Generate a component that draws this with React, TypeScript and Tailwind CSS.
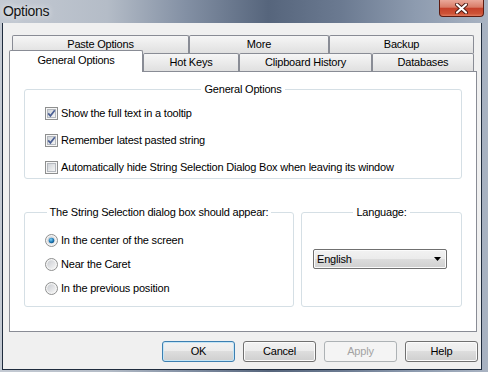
import React from "react";

const Check = ({ checked }: { checked: boolean }) => (
  <svg width="13" height="13" viewBox="0 0 13 13" className="shrink-0">
    <defs>
      <linearGradient id="cbFill" x1="0" y1="0" x2="1" y2="1">
        <stop offset="0" stopColor="#cdd1d6" />
        <stop offset="1" stopColor="#f7f7f7" />
      </linearGradient>
    </defs>
    <rect x="0.5" y="0.5" width="12" height="12" fill="#f6f6f6" stroke="#8e8f8f" />
    <rect x="2.5" y="2.5" width="8" height="8" fill="url(#cbFill)" stroke="#b4b8be" />
    {checked && (
      <path d="M3.2 6.4 L5.4 8.9 L9.8 3.3" fill="none" stroke="#4b5f94" strokeWidth="1.7" />
    )}
  </svg>
);

const Radio = ({ checked }: { checked: boolean }) => (
  <svg width="13" height="13" viewBox="0 0 13 13" className="shrink-0">
    <defs>
      <linearGradient id="rbFill" x1="0" y1="0" x2="1" y2="1">
        <stop offset="0" stopColor="#c9ccd1" />
        <stop offset="1" stopColor="#f6f6f6" />
      </linearGradient>
      <radialGradient id="rbDot" cx="0.4" cy="0.35" r="0.7">
        <stop offset="0" stopColor="#7fd0f6" />
        <stop offset="0.6" stopColor="#1f7bb8" />
        <stop offset="1" stopColor="#0c4c7c" />
      </radialGradient>
    </defs>
    <circle cx="6.5" cy="6.5" r="6" fill="#f4f4f4" stroke="#8e8f8f" />
    <circle cx="6.5" cy="6.5" r="4.3" fill="url(#rbFill)" />
    {checked && <circle cx="6.5" cy="6.5" r="2.8" fill="url(#rbDot)" />}
  </svg>
);

const tabBase =
  "h-full flex items-center justify-center border border-b-0 border-[#898c95] rounded-t-[2px] bg-linear-to-b from-[#f6f6f6] to-[#e0e0e0] text-[11px] tracking-[-0.2px] text-black";

const btnBase =
  "w-[73px] h-[21px] rounded-[3px] border text-[11px] tracking-[-0.2px] flex items-center justify-center";

export default function App() {
  const checks = [
    { label: "Show the full text in a tooltip", checked: true },
    { label: "Remember latest pasted string", checked: true },
    { label: "Automatically hide String Selection Dialog Box when leaving its window", checked: false },
  ];
  const radios = [
    { label: "In the center of the screen", checked: true },
    { label: "Near the Caret", checked: false },
    { label: "In the previous position", checked: false },
  ];

  return (
    <div className="w-[488px] h-[372px] flex flex-col overflow-hidden font-['Liberation_Sans',Arial,sans-serif] bg-[linear-gradient(90deg,#c4cad3_0%,#b4bcc7_22%,#8390a4_38%,#56657c_55%,#6b7a91_70%,#8d9baf_85%,#a9b3c2_100%)]">
      {/* Title bar */}
      <div className="h-[23px] flex items-start justify-between">
        <span className="pl-[3px] pt-[3px] text-[14px] tracking-[-0.3px] text-[#141414] leading-[17px] [text-shadow:0_0_6px_#ffffff]">
          Options
        </span>
        <div className="mr-[4px] w-[45px] h-[17px] rounded-b-[4px] border border-t-0 border-[#5e1b10] bg-[linear-gradient(#eaa899,#d97c67_45%,#c5412a_52%,#cd5236_85%,#e07a5e)] flex items-center justify-center">
          <svg width="13" height="11" viewBox="0 0 13 11">
            <path d="M2 1.5 L11 9.5 M11 1.5 L2 9.5" stroke="#4a1a12" strokeWidth="4" strokeLinecap="round" />
            <path d="M2 1.5 L11 9.5 M11 1.5 L2 9.5" stroke="#ffffff" strokeWidth="2.2" strokeLinecap="round" />
          </svg>
        </div>
      </div>

      <div className="flex">
        <div className="w-[2px]" />
        {/* Client area */}
        <div className="w-[480px] h-[347px] border border-t-0 border-[#1f2c3e] bg-[#f0f0f0] pl-[6px] pr-[4px] pt-[12px]">
          {/* Back tab row */}
          <div className="flex h-[18px] ml-[3px]">
            <div className={`${tabBase} w-[177px]`}>Paste Options</div>
            <div className={`${tabBase} w-[140px]`}>More</div>
            <div className={`${tabBase} w-[145px]`}>Backup</div>
          </div>
          {/* Front tab row */}
          <div className="flex h-[18px] items-end">
            <div className="relative z-10 w-[134px] h-[22px] -mb-px border border-b-0 border-[#898c95] rounded-t-[2px] bg-white flex items-center justify-center pb-[3px] text-[11px] tracking-[-0.2px] text-black">
              General Options
            </div>
            <div className={`${tabBase} w-[96px]`}>Hot Keys</div>
            <div className={`${tabBase} w-[133px]`}>Clipboard History</div>
            <div className={`${tabBase} w-[102px]`}>Databases</div>
          </div>

          {/* Tab panel */}
          <div className="h-[261px] border border-[#898c95] bg-white px-[14px] pt-[10px] text-[11px] tracking-[-0.2px] text-black">
            <fieldset className="h-[97px] border border-[#d5dfe5] rounded-[3px] min-w-0">
              <legend className="mx-auto px-[3px] leading-[14px]">General Options</legend>
              <div className="flex flex-col gap-[14px] pt-[11px] pl-[20px]">
                {checks.map((c) => (
                  <div key={c.label} className="flex items-center gap-[3px] h-[13px] leading-[13px]">
                    <Check checked={c.checked} />
                    <span>{c.label}</span>
                  </div>
                ))}
              </div>
            </fieldset>

            <div className="flex gap-[7px] mt-[26px]">
              <fieldset className="w-[270px] h-[102px] border border-[#d5dfe5] rounded-[3px] min-w-0">
                <legend className="mx-auto px-[3px] leading-[14px]">
                  The String Selection dialog box should appear:
                </legend>
                <div className="flex flex-col gap-[11px] pt-[15px] pl-[20px]">
                  {radios.map((r) => (
                    <div key={r.label} className="flex items-center gap-[3px] h-[13px] leading-[13px]">
                      <Radio checked={r.checked} />
                      <span>{r.label}</span>
                    </div>
                  ))}
                </div>
              </fieldset>

              <fieldset className="flex-1 h-[102px] border border-[#d5dfe5] rounded-[3px] min-w-0">
                <legend className="mx-auto px-[3px] leading-[14px]">Language:</legend>
                <div className="pt-[30px] pl-[11px]">
                  <div className="w-[134px] h-[20px] rounded-[2px] border border-[#707070] bg-[linear-gradient(#f2f2f2,#ebebeb_50%,#dddddd_50%,#cfcfcf)] shadow-[inset_0_0_0_1px_#fbfbfb] flex items-center justify-between pl-[3px] pr-[5px]">
                    <span>English</span>
                    <svg width="7" height="4" viewBox="0 0 7 4">
                      <path d="M0 0 H7 L3.5 4 Z" fill="#000000" />
                    </svg>
                  </div>
                </div>
              </fieldset>
            </div>
          </div>

          {/* Buttons */}
          <div className="flex justify-end gap-[8px] mt-[9px] -mr-px">
            <button className={`${btnBase} border-[#3c7fb1] bg-[linear-gradient(#f2f2f2,#ebebeb_50%,#dddddd_50%,#cfcfcf)] shadow-[inset_0_0_0_1px_#c4e5f6] text-black`}>
              OK
            </button>
            <button className={`${btnBase} border-[#707070] bg-[linear-gradient(#f2f2f2,#ebebeb_50%,#dddddd_50%,#cfcfcf)] shadow-[inset_0_0_0_1px_#fbfbfb] text-black`}>
              Cancel
            </button>
            <button className={`${btnBase} border-[#adb2b5] bg-[#f4f4f4] text-[#a3a3a3]`}>
              Apply
            </button>
            <button className={`${btnBase} border-[#707070] bg-[linear-gradient(#f2f2f2,#ebebeb_50%,#dddddd_50%,#cfcfcf)] shadow-[inset_0_0_0_1px_#fbfbfb] text-black`}>
              Help
            </button>
          </div>
        </div>
        <div className="w-[6px]" />
      </div>
    </div>
  );
}
